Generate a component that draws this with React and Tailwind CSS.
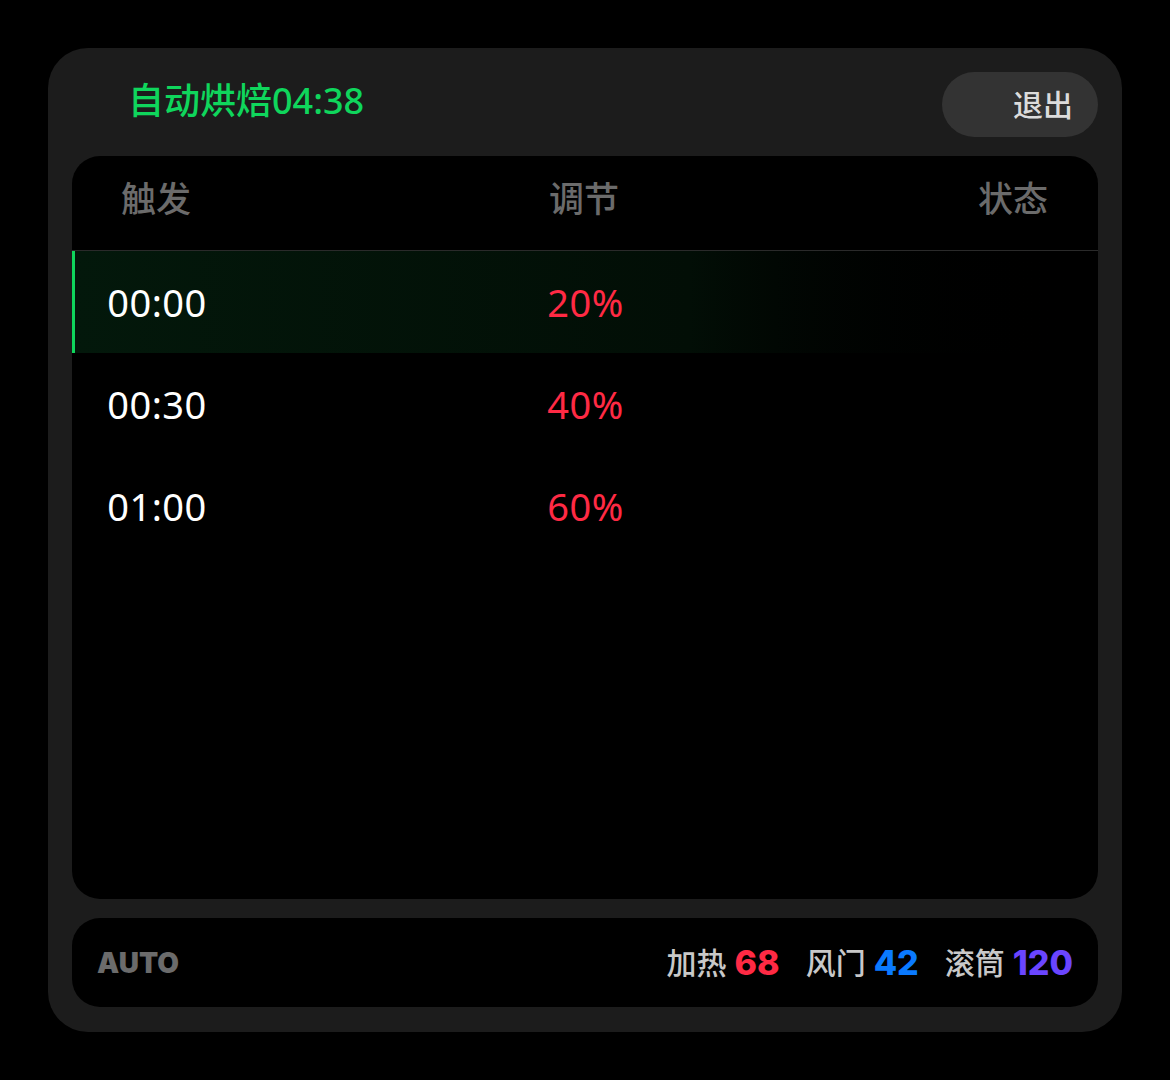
import React from "react";

const font = { fontFamily: '"Noto Sans", "Noto Sans CJK SC", sans-serif' };
const numFont = { fontFamily: 'Inter, "Noto Sans CJK SC", sans-serif' };

const rows = [
  { t: "00:00", v: "20%", active: true },
  { t: "00:30", v: "40%" },
  { t: "01:00", v: "60%" },
];

export default function App() {
  return (
    <div className="w-[1170px] h-[1080px] bg-black pt-[48px] pl-[48px]" style={font}>
      <div className="w-[1074px] h-[984px] bg-[#1c1c1c] rounded-[40px] px-[24px] pt-[24px] pb-[25px] flex flex-col">
        {/* header */}
        <div className="flex items-center justify-between h-[65px]">
          <div className="pl-[56px] text-[36px] font-medium leading-none text-[#0fd65c] -translate-y-[4px]">
            自动烘焙04:38
          </div>
          <button className="w-[156px] h-[65px] rounded-full bg-[#333333] flex items-center justify-end pr-[25px] text-[30px] font-medium text-[#dcdcdc] leading-none">
            退出
          </button>
        </div>

        {/* table panel */}
        <div className="mt-[19px] h-[743px] bg-black rounded-[28px] overflow-hidden">
          <div className="grid grid-cols-[168px_1fr_170px] h-[95px] items-center border-b border-[#2a2a2a] text-[35px] font-medium text-[#6b6b6b] leading-none">
            <div className="text-center pb-[10px]">触发</div>
            <div className="text-center pb-[10px]">调节</div>
            <div className="text-center pb-[10px]">状态</div>
          </div>
          {rows.map((r, i) => (
            <div
              key={i}
              className={
                "grid grid-cols-[168px_1fr_170px] items-center leading-none text-[38px] tracking-[0.5px] " +
                (r.active
                  ? "h-[102px] border-l-[3px] border-[#0fd65c] bg-linear-to-r from-[#03180b] via-[#020e06] via-60% to-black"
                  : "h-[102px] border-l-[3px] border-transparent")
              }
            >
              <div className="text-center text-white -ml-[4px]">{r.t}</div>
              <div className="text-center text-[#ff2a44]">{r.v}</div>
              <div />
            </div>
          ))}
        </div>

        {/* footer */}
        <div className="mt-[19px] h-[89px] bg-black rounded-[28px] flex items-center justify-between pl-[25px] pr-[25px]">
          <div className="text-[28px] font-black text-[#6b6b6b] leading-none" style={numFont}>
            AUTO
          </div>
          <div className="flex items-center leading-none">
            <span className="text-[30px] font-medium text-[#c8c8c8]">加热</span>
            <span className="ml-[8px] text-[34px] font-extrabold text-[#ff2a44]" style={numFont}>68</span>
            <span className="ml-[26px] text-[30px] font-medium text-[#c8c8c8]">风门</span>
            <span className="ml-[8px] text-[34px] font-extrabold text-[#0a7aff]" style={numFont}>42</span>
            <span className="ml-[26px] text-[30px] font-medium text-[#c8c8c8]">滚筒</span>
            <span className="ml-[8px] text-[34px] font-extrabold text-[#6a45ff]" style={numFont}>120</span>
          </div>
        </div>
      </div>
    </div>
  );
}
